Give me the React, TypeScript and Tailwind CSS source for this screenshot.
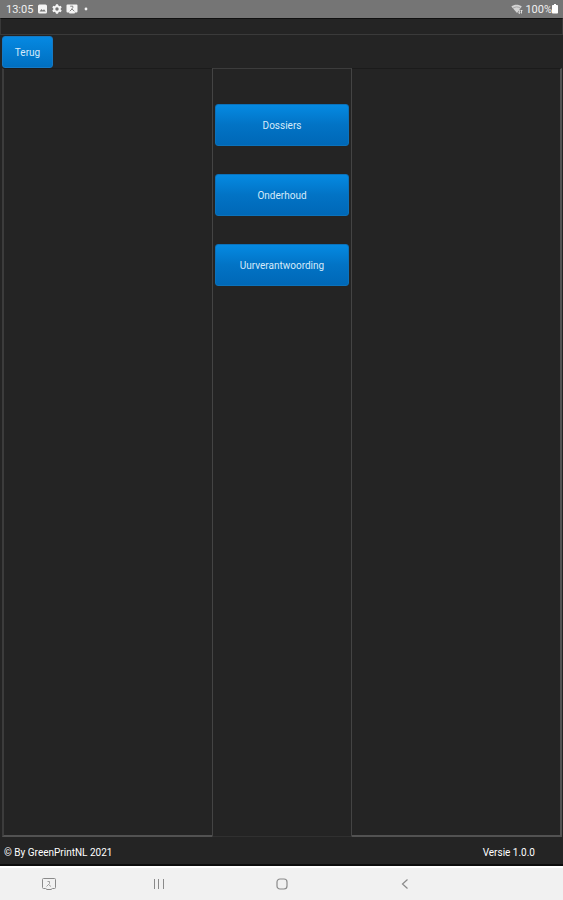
const menuItems = ["Dossiers", "Onderhoud", "Uurverantwoording"];

export default function App() {
  return (
    <div className="flex min-h-screen flex-col bg-[#242424] font-['Roboto','Liberation_Sans',sans-serif] text-white">
      <StatusBar />

      <header>
        <div className="h-4 border-x border-t border-t-[#101010] border-x-[#383838]" />
        <div className="flex h-[34px] items-end border-t border-[#3a3a3a] pl-[2px]">
          <button
            type="button"
            className="h-8 w-[51px] rounded-[3px] border border-[#1579c4] bg-gradient-to-b from-[#0689e2] to-[#006fc0] text-[10px] text-[#d5eafa]"
          >
            Terug
          </button>
        </div>
      </header>

      <main className="grid flex-1 grid-cols-[3fr_2fr_3fr] pl-[2px] pr-px">
        <div className="border-b-2 border-l-2 border-t border-b-[#525252] border-l-[#3c3c3c] border-t-[#1b1b1b]" />
        <nav className="flex flex-col gap-7 border-x border-b border-t border-x-[#444] border-b-[#303030] border-t-[#3c3c3c] px-[2px] pt-[35px]">
          {menuItems.map((label) => (
            <button
              key={label}
              type="button"
              className="h-[42px] rounded-[3px] border border-[#0b72bb] bg-gradient-to-b from-[#058ae2] via-[#0273c5] to-[#0068b7] text-[10px] text-[#d5eafa]"
            >
              {label}
            </button>
          ))}
        </nav>
        <div className="border-b-2 border-r-2 border-t border-b-[#525252] border-r-[#525252] border-t-[#1b1b1b]" />
      </main>

      <footer className="flex h-[29px] items-center justify-between border-b-2 border-[#0c0c0c] pl-1 pr-7 pt-[3px] text-[10px]">
        <span>© By GreenPrintNL 2021</span>
        <span>Versie 1.0.0</span>
      </footer>

      <NavigationBar />
    </div>
  );
}

function StatusBar() {
  return (
    <div className="flex h-[18px] items-center justify-between bg-[#757575] pl-[6px] pr-[5px] text-[11px] leading-none text-[#f0f0f0]">
      <div className="flex items-center gap-1">
        <span>13:05</span>
        {/* picture */}
        <svg width="11" height="10" viewBox="0 0 11 10">
          <rect x="1" y="0.5" width="9" height="9" rx="1.5" fill="#f4f4f4" />
          <path d="M2.5 7.5 4.5 5l1.3 1.4L7 5.2l1.8 2.3z" fill="#757575" />
        </svg>
        {/* settings */}
        <svg width="10" height="10" viewBox="0 0 10 10">
          <path
            d="M4 .3h2l.4 1.3 1 .6 1.3-.4 1 1.8-1 .9v1l1 .9-1 1.8-1.3-.4-1 .6L6 9.7H4l-.4-1.3-1-.6-1.3.4-1-1.8 1-.9v-1l-1-.9 1-1.8 1.3.4 1-.6z"
            fill="#f4f4f4"
          />
          <circle cx="5" cy="5" r="1.7" fill="#757575" />
        </svg>
        {/* screen capture */}
        <svg width="12" height="10" viewBox="0 0 12 10">
          <path d="M1.5.5h9a1 1 0 0 1 1 1v6a1 1 0 0 1-1 1H9l-.5 1h-5L3 8.5H1.5a1 1 0 0 1-1-1v-6a1 1 0 0 1 1-1z" fill="#f4f4f4" />
          <path d="M4.2 2.2h2.6v1.6L5.6 5M3.8 7.2 6 5l2.3 2.2" fill="none" stroke="#757575" strokeWidth="0.9" />
        </svg>
        <svg width="8" height="10" viewBox="0 0 8 10">
          <circle cx="4" cy="5" r="1.4" fill="#f4f4f4" />
        </svg>
      </div>
      <div className="flex items-center">
        {/* wifi */}
        <svg width="12" height="10" viewBox="0 0 12 10" className="mr-[2px]">
          <path d="M.3 2.5C3.3 0 7.8 0 10.800 2.500L6 9z" fill="#d4d4d4" />
          <path d="M2 4.2c2.4-1.7 5-1.7 7.500 0" fill="none" stroke="#757575" strokeWidth="0.5" />
          <path d="M8.300 9.500V6m2.200 0v3.500M7.400 8.500l.9 1 .9-1M9.600 7l.9-1 .9 1" fill="none" stroke="#e8e8e8" strokeWidth="0.9" />
        </svg>
        <span>100%</span>
        {/* battery */}
        <svg width="6" height="10" viewBox="0 0 6 10">
          <path d="M2 0h2v1h1.2q.8 0 .8.8v6.900q0 .8-.8.8H.8Q0 9.500 0 8.700V1.800Q0 1 .8 1H2z" fill="#fff" />
        </svg>
      </div>
    </div>
  );
}

function NavigationBar() {
  const button = "flex items-center justify-center";

  return (
    <nav className="grid h-[34px] grid-cols-[98fr_122fr_123fr_123fr_97fr] border-t-2 border-white bg-[#f1f1f1] text-[#8a8a8a]">
      <button type="button" aria-label="Screenshot" className={button}>
        <svg width="14" height="14" viewBox="0 0 14 14" fill="none" stroke="currentColor">
          <path d="M3.500 11.500H1.500a1 1 0 0 1-1-1v-8a1 1 0 0 1 1-1h11a1 1 0 0 1 1 1v8a1 1 0 0 1-1 1h-2l-1.500 1H5z" />
          <path d="M5.500 4.500h2v2l-1 1M4.500 9.500l2-2 2.500 2" strokeWidth="0.8" />
        </svg>
      </button>
      <button type="button" aria-label="Recent apps" className={button}>
        <svg width="12" height="12" viewBox="0 0 12 12" stroke="currentColor">
          <path d="M1.500 1v10M5.500 1v10M10.500 1v10" />
        </svg>
      </button>
      <button type="button" aria-label="Home" className={button}>
        <svg width="12" height="12" viewBox="0 0 12 12" fill="none" stroke="currentColor" strokeWidth="1.200">
          <rect x="1" y="1" width="10" height="10" rx="3" />
        </svg>
      </button>
      <button type="button" aria-label="Back" className={button}>
        <svg width="12" height="12" viewBox="0 0 12 12" fill="none" stroke="currentColor" strokeWidth="1.200">
          <path d="M8.500 1.500 3.500 6l5 4.500" />
        </svg>
      </button>
    </nav>
  );
}
